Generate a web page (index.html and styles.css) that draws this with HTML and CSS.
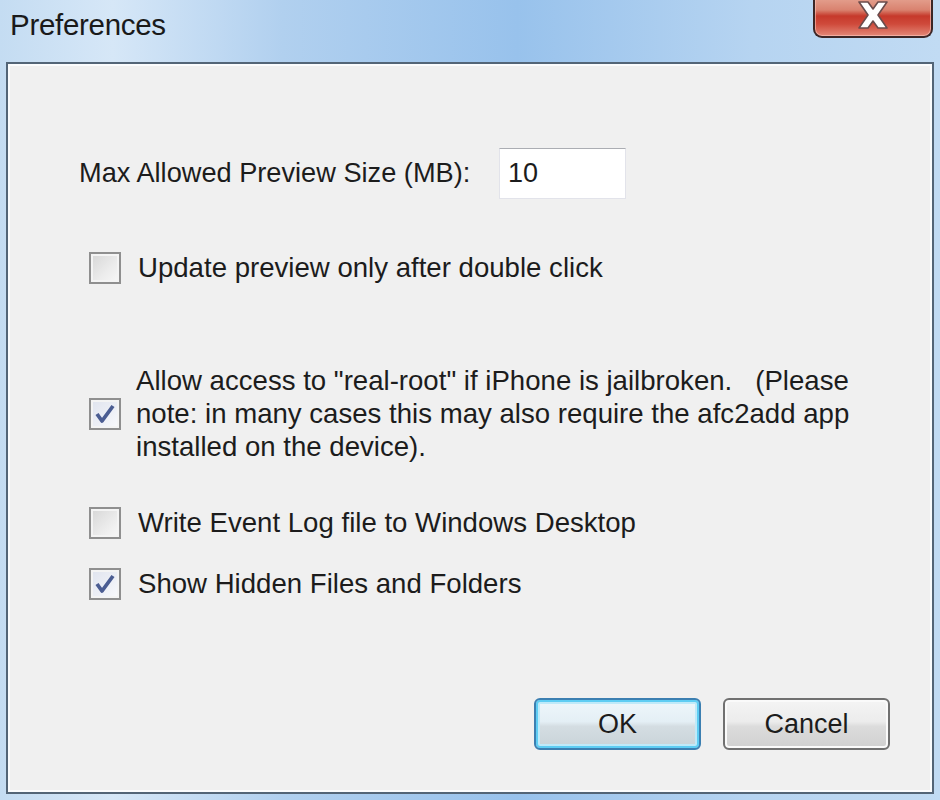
FILE: index.html
```html
<!DOCTYPE html>
<html lang="en">
<head>
  <meta charset="UTF-8" />
  <title>Preferences</title>
  <link rel="stylesheet" href="styles.css">
</head>
<body>
  <div class="window">
    <div class="titlebar">
      <span class="title">Preferences</span>
      <button class="close" aria-label="Close">
        <svg width="44" height="30" viewBox="0 0 44 30">
          <path d="M8 2 H17 L22 9 L27 2 H36 L27 15 L36 28 H27 L22 21 L17 28 H8 L17 15 Z" fill="#fff" stroke="#6b4c4c" stroke-width="1.6" stroke-linejoin="round"/>
        </svg>
      </button>
    </div>
    <div class="client">
      <div class="size-row">
        <label for="max-size">Max Allowed Preview Size (MB):</label>
        <input id="max-size" class="textbox" type="text" value="10">
      </div>

      <div class="options">
        <div class="check first">
          <span class="box"></span>
          <span class="text">Update preview only after double click</span>
        </div>
        <div class="check multi">
          <span class="box checked">
            <svg width="24" height="24" viewBox="0 0 24 24"><path d="M4 12 L9 19 L20 4" fill="none" stroke="#4b5d92" stroke-width="3.8" stroke-linejoin="round"/></svg>
          </span>
          <span class="text">Allow access to "real-root" if iPhone is jailbroken.&nbsp;&nbsp; (Please note: in many cases this may also require the afc2add app installed on the device).</span>
        </div>
        <div class="check spaced">
          <span class="box"></span>
          <span class="text">Write Event Log file to Windows Desktop</span>
        </div>
        <div class="check">
          <span class="box checked">
            <svg width="24" height="24" viewBox="0 0 24 24"><path d="M4 12 L9 19 L20 4" fill="none" stroke="#4b5d92" stroke-width="3.8" stroke-linejoin="round"/></svg>
          </span>
          <span class="text">Show Hidden Files and Folders</span>
        </div>
      </div>

      <div class="buttons">
        <button class="btn default">OK</button>
        <button class="btn">Cancel</button>
      </div>
    </div>
  </div>
</body>
</html>
```

FILE: styles.css
```css
* { box-sizing: border-box; margin: 0; padding: 0; }
body { font-family: "Liberation Sans", Arial, sans-serif; color: #1c1c1c; background: #b9d5ef; }

.window {
  width: 940px; height: 800px;
  display: flex; flex-direction: column;
  background: linear-gradient(90deg, #c4dcf2 0%, #d6e7f7 12%, #b1d0ef 30%, #98c2ec 55%, #b6d4f1 80%, #c1dbf3 100%);
}

.titlebar { height: 62px; display: flex; align-items: flex-start; }
.title { font-size: 29.5px; color: #1a1a1a; padding: 8px 0 0 10px; letter-spacing: -0.3px; }
.close {
  margin-left: auto; margin-right: 7px; margin-top: -4px;
  width: 120px; height: 42px;
  border: 2px solid #3c2626; border-top: none;
  border-radius: 0 0 9px 9px;
  background: linear-gradient(180deg, #e6a695 0%, #d9826f 35%, #c6392b 50%, #cf4a3b 70%, #e38878 100%);
  box-shadow: inset 0 0 0 1px rgba(255, 200, 190, 0.6);
  display: flex; align-items: center; justify-content: center;
  padding-bottom: 2px;
}

.client {
  flex: 1; margin: 0 6px 6px 6px;
  background: #f0f0f0;
  border: 2px solid #536577;
  box-shadow: inset 0 0 0 2px #fbfcfd;
  display: flex; flex-direction: column;
  padding: 84px 0 0 0;
}

.size-row { display: flex; align-items: center; padding-left: 71px; height: 50px; }
.size-row label { font-size: 27.2px; width: 420px; }
.textbox {
  width: 127px; height: 51px;
  font: inherit; font-size: 27px; color: #1c1c1c;
  padding: 0 0 0 8px;
  background: #fff;
  border: 1px solid #e2e3ea; border-top-color: #abadb3;
  outline: none;
}

.options { padding-left: 81px; display: flex; flex-direction: column; }
.check { display: flex; align-items: center; gap: 17px; font-size: 27.6px; line-height: 33px; margin-top: 28px; }
.check.first { margin-top: 53px; }
.check.multi { margin-top: 80px; gap: 15px; }
.check.spaced { margin-top: 43px; }
.check .text { width: 740px; }

.box {
  flex: none; width: 32px; height: 32px;
  border: 2px solid #8f8f8f;
  background: linear-gradient(135deg, #d6d6d6 0%, #ececec 60%, #f8f8f8 100%);
  box-shadow: inset 0 0 0 2px #f4f4f4;
  display: flex; align-items: center; justify-content: center;
}
.box.checked { background: linear-gradient(135deg, #dfe3ee 0%, #eef0f6 60%, #f9fafc 100%); }

.buttons { margin-top: auto; margin-bottom: 42px; display: flex; justify-content: flex-end; gap: 22px; padding-right: 42px; }
.btn {
  width: 167px; height: 52px;
  font-family: inherit; font-size: 27px; color: #1c1c1c;
  border: 2px solid #707070; border-radius: 6px;
  background: linear-gradient(180deg, #f4f4f4 0%, #ececec 45%, #dcdcdc 55%, #d0d0d0 100%);
  box-shadow: inset 0 0 0 2px #fafafa;
}
.btn.default {
  border-color: #3c7fb1;
  box-shadow: inset 0 0 0 2px #5ecdf3, inset 0 0 0 4px #bfeaf9;
  background: linear-gradient(180deg, #eef7fb 0%, #e4eff5 45%, #d4dde2 55%, #c9d3d8 100%);
}
```
